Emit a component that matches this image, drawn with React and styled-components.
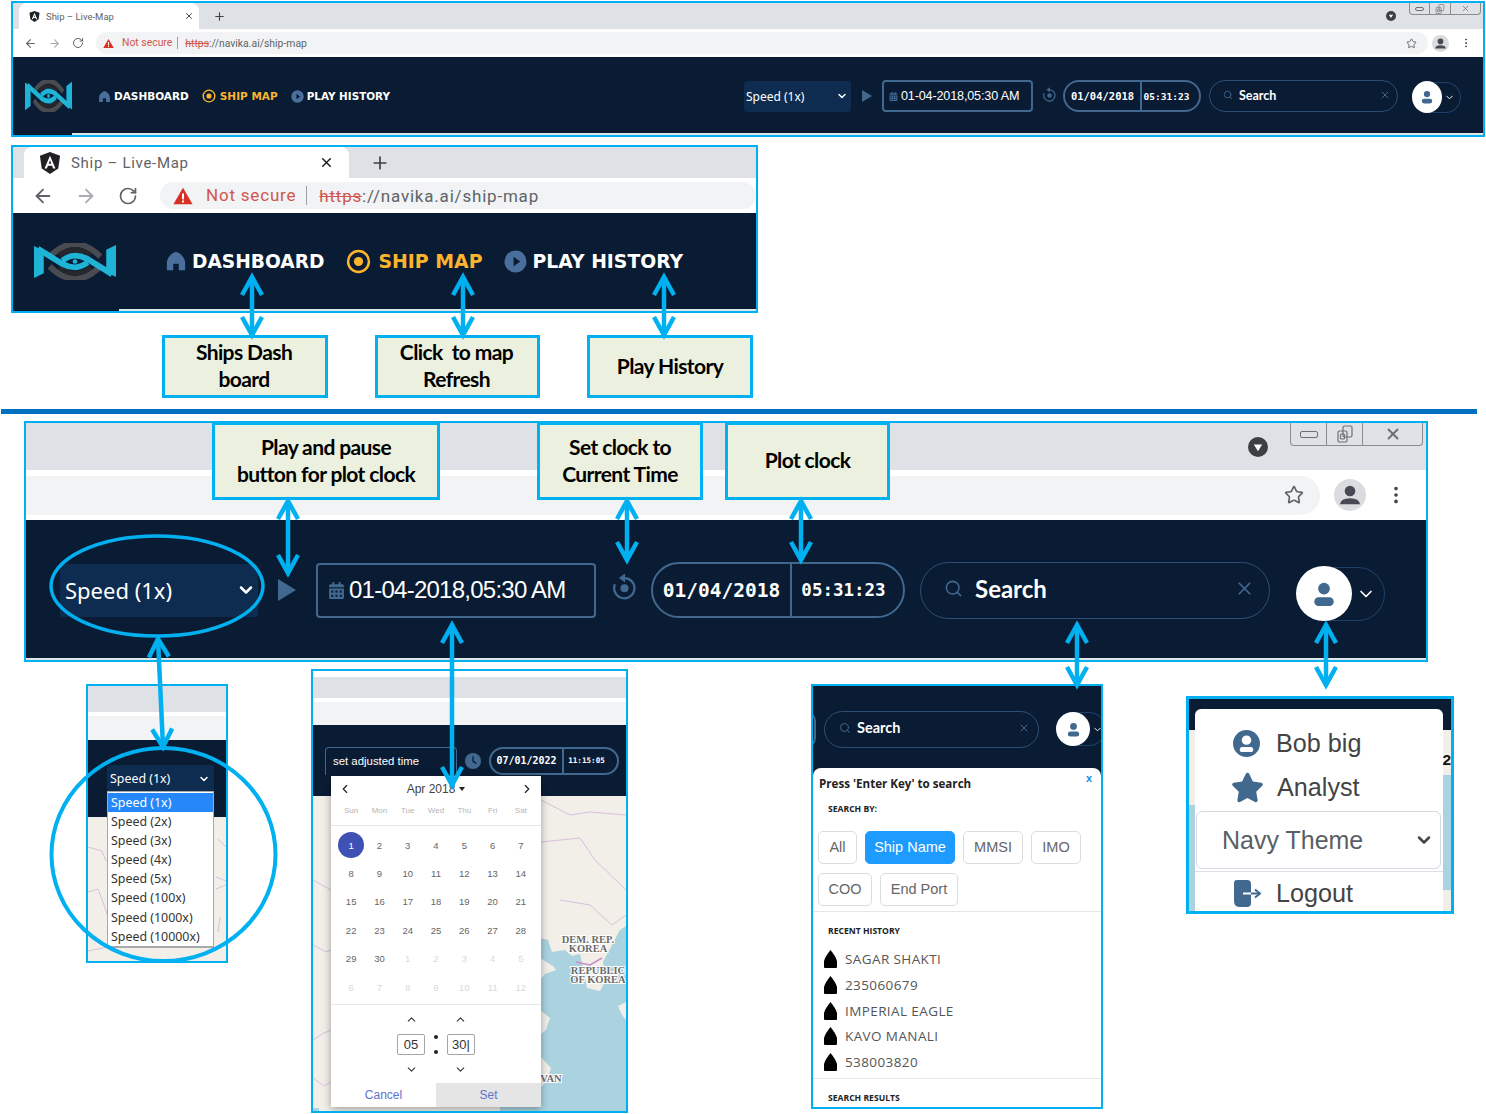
import React from "react";
import styled, { createGlobalStyle } from "styled-components";
import { ArrowLeft, ArrowRight, ChevronDown, ChevronLeft, ChevronRight, ChevronUp, EllipsisVertical, Plus, RotateCw, Search, Star, X } from "lucide-react";
import { FaCalendarAlt, FaStar } from "react-icons/fa";

const CYAN = "#00b0f0";
const NAVY = "#0a1c33";
const STEEL = "#41688f";
const LAND = "#f2efe9";
const SEA = "#aad3df";
const BORDERLINE = "#d9bfdc";

/* little drawings */
function AngularIcon({ size }) {
  return (
    <svg width={size} height={size} viewBox="0 0 24 24">
      <path d="M12 0 L23 4 L21 18 L12 24 L3 18 L1 4Z" fill="#202124" />
      <path d="M12 4 L18 18 H15.4 L14.3 15 H9.7 L8.6 18 H6Z M12 9 L10.6 12.8 H13.4Z" fill="#fff" fillRule="evenodd" />
    </svg>
  );
}

function WarnIcon({ size }) {
  return (
    <svg width={size} height={size} viewBox="0 0 24 24">
      <path d="M12 2 L23.5 22 H0.5Z" fill="#d93025" />
      <rect x="10.8" y="9" width="2.4" height="7" fill="#fff" />
      <rect x="10.8" y="17.4" width="2.4" height="2.4" fill="#fff" />
    </svg>
  );
}

function CaptionDot({ size }) {
  return (
    <svg width={size} height={size} viewBox="0 0 24 24">
      <circle cx="12" cy="12" r="12" fill="#3c4043" />
      <path d="M7 9 H17 L12 17Z" fill="#fff" />
    </svg>
  );
}

function Logo({ width, height }) {
  return (
    <svg width={width} height={height} viewBox="0 0 84 38" preserveAspectRatio="none" style={{ display: "block", flexShrink: 0 }}>
      <path d="M16 14 Q42 -12 68 14" fill="none" stroke="#4a4b50" strokeWidth="6" />
      <path d="M16 24 Q42 50 68 24" fill="none" stroke="#4a4b50" strokeWidth="6" />
      <path d="M26 13 Q42 1 58 13" fill="none" stroke="#26272c" strokeWidth="5" />
      <path d="M26 25 Q42 37 58 25" fill="none" stroke="#26272c" strokeWidth="5" />
      <path d="M0 3 L10 8 V31 L0 36Z" fill="#1fb4d6" />
      <path d="M84 35 L74 30 V7 L84 2Z" fill="#1fb4d6" />
      <path d="M4 6 L30 22 Q36 25 42 25 Q48 25 55 20" fill="none" stroke="#1fb4d6" strokeWidth="6" />
      <path d="M29 18 Q36 13 42 13 Q48 13 54 16 L80 32" fill="none" stroke="#1fb4d6" strokeWidth="6" />
      <circle cx="42" cy="19" r="2.4" fill="#1fb4d6" />
    </svg>
  );
}

function HomeIcon({ size }) {
  return (
    <svg width={size} height={size} viewBox="0 0 24 24">
      <path d="M12 2 C6 4 2 9 2 14 V22 H9 V15 H15 V22 H22 V14 C22 9 18 4 12 2Z" fill="#4a6f9c" />
    </svg>
  );
}

function TargetIcon({ size }) {
  return (
    <svg width={size} height={size} viewBox="0 0 24 24">
      <circle cx="12" cy="12" r="10" fill="none" stroke="#fcb42d" strokeWidth="2.4" />
      <circle cx="12" cy="12" r="4.4" fill="#fcb42d" />
    </svg>
  );
}

function PlayDisc({ size }) {
  return (
    <svg width={size} height={size} viewBox="0 0 24 24">
      <circle cx="12" cy="12" r="11.5" fill="#4a6f9c" />
      <path d="M10 7 L17 12 L10 17Z" fill="#0a1c33" />
    </svg>
  );
}

function ResetIcon({ size }) {
  return (
    <svg width={size} height={size} viewBox="0 0 24 24">
      <path d="M11 4.5 A9 9 0 1 1 3.5 10" fill="none" stroke={STEEL} strokeWidth="2" />
      <path d="M12.5 0.5 V8.5 L7 4.5Z" fill={STEEL} />
      <circle cx="12" cy="13.5" r="3.6" fill={STEEL} />
    </svg>
  );
}

function ClockDisc({ size }) {
  return (
    <svg width={size} height={size} viewBox="0 0 24 24">
      <circle cx="12" cy="12" r="12" fill={STEEL} />
      <path d="M12 5 V12.5 L17 15.5" fill="none" stroke={NAVY} strokeWidth="2" />
    </svg>
  );
}

function Person({ size, color = STEEL }) {
  return (
    <svg width={size} height={size} viewBox="0 0 24 24">
      <circle cx="12" cy="7" r="5.4" fill={color} />
      <rect x="3" y="15" width="18" height="8" rx="4" fill={color} />
    </svg>
  );
}

function ChromeAvatar({ size }) {
  return (
    <svg width={size} height={size} viewBox="0 0 24 24">
      <circle cx="12" cy="12" r="12" fill="#dadce0" />
      <circle cx="12" cy="9" r="4" fill="#474a54" />
      <path d="M4.5 19 Q5 14.5 12 14.5 Q19 14.5 19.5 19Z" fill="#474a54" />
    </svg>
  );
}

function UserDisc({ size }) {
  return (
    <svg width={size} height={size} viewBox="0 0 24 24">
      <circle cx="12" cy="12" r="12" fill={STEEL} />
      <circle cx="12" cy="9" r="4.2" fill="#fff" />
      <rect x="6" y="15" width="12" height="4.6" rx="2.3" fill="#fff" />
    </svg>
  );
}

function LogoutIcon({ width, height }) {
  return (
    <svg width={width} height={height} viewBox="0 0 27 27">
      <path d="M3 0 H13 Q17 0 17 4 V23 Q17 27 13 27 H6 Q0 27 0 21 V3 Q0 0 3 0Z" fill={STEEL} />
      <path d="M9 13.5 H17" stroke="#fff" strokeWidth="2" />
      <path d="M17 13.5 H25" stroke={STEEL} strokeWidth="2" />
      <path d="M21 9.5 L26 13.5 L21 17.5" fill="none" stroke={STEEL} strokeWidth="2" />
    </svg>
  );
}

function ShipIcon() {
  return (
    <svg width="13" height="18" viewBox="0 0 13 18" style={{ flexShrink: 0 }}>
      <path d="M6.5 0 C9 3 12 7 13 11 V17 Q13 18 12 18 H1 Q0 18 0 17 V11 C1 7 4 3 6.5 0Z" fill="#000" />
    </svg>
  );
}

function Restore({ size }) {
  return (
    <svg width={size} height={size} viewBox="0 0 18 18" fill="none" stroke="#6f6f6f" strokeWidth="1.2">
      <rect x="2" y="6" width="9" height="11" rx="1.5" />
      <rect x="7" y="1" width="9" height="11" rx="1.5" />
      <rect x="4.5" y="9" width="4" height="5" rx="1" />
    </svg>
  );
}

/* page + panels */
const GlobalStyle = createGlobalStyle`
  html, body { margin: 0; padding: 0; background: #fff; }
  body { font-family: "Liberation Sans", Arial, sans-serif; }
  * { box-sizing: border-box; }
`;

const Page = styled.div`
  position: relative;
  width: 1486px;
  height: 1114px;
  overflow: hidden;
  background: #fff;
  padding-top: 1px;
`;

const Panel = styled.div`
  position: relative;
  display: flex;
  flex-direction: column;
  flex-shrink: 0;
  width: ${(p) => p.$w}px;
  height: ${(p) => p.$h}px;
  margin-left: ${(p) => p.$ml || 0}px;
  margin-top: ${(p) => p.$mt || 0}px;
  border: ${(p) => p.$b || 2}px solid ${CYAN};
  background: #fff;
  overflow: hidden;
`;

const TabStrip = styled.div`
  display: flex;
  align-items: flex-end;
  flex-shrink: 0;
  height: ${(p) => p.$h}px;
  padding-left: ${(p) => p.$pl || 0}px;
  padding-right: ${(p) => p.$pr || 0}px;
  background: #dee1e6;
`;

const Tab = styled.div`
  display: flex;
  align-items: center;
  width: ${(p) => p.$w}px;
  height: ${(p) => p.$h}px;
  padding: 0 ${(p) => p.$pr}px 0 ${(p) => p.$pl}px;
  gap: ${(p) => p.$gap}px;
  background: #fff;
  border-radius: 8px 8px 0 0;
  font-family: "Roboto", sans-serif;
  font-size: ${(p) => p.$fs}px;
  letter-spacing: ${(p) => p.$ls || 0}px;
  color: #5f6368;
`;

const TabTitle = styled.span`
  flex: 1;
`;

const NewTab = styled.div`
  display: flex;
  align-items: center;
  height: ${(p) => p.$h}px;
  margin-left: ${(p) => p.$ml}px;
  color: #3c4043;
`;

const CaptionSlot = styled.div`
  display: flex;
  margin-left: auto;
  align-self: center;
`;

const WindowButtons = styled.div`
  display: flex;
  align-self: flex-start;
  width: ${(p) => p.$w}px;
  height: ${(p) => p.$h}px;
  margin-left: ${(p) => p.$ml}px;
  border: 1px solid #8c8c8c;
  border-top: none;
  border-radius: 0 0 4px 4px;
`;

const WindowCell = styled.div`
  display: flex;
  align-items: center;
  justify-content: center;
  flex: ${(p) => p.$grow};
  color: #6f6f6f;
  & + & {
    border-left: 1px solid #8c8c8c;
  }
`;

const MinBar = styled.span`
  display: block;
  width: ${(p) => p.$w}px;
  height: ${(p) => p.$h}px;
  border: 1px solid #6f6f6f;
  border-radius: 2px;
`;

const ToolBar = styled.div`
  display: flex;
  align-items: center;
  flex-shrink: 0;
  height: ${(p) => p.$h}px;
  padding: 0 ${(p) => p.$pr || 0}px 0 ${(p) => p.$pl || 0}px;
  gap: ${(p) => p.$gap || 0}px;
  background: #fff;
  color: #5f6368;
`;

const Omnibox = styled.div`
  display: flex;
  align-items: center;
  flex: 1;
  height: ${(p) => p.$h}px;
  margin-left: ${(p) => p.$ml || 0}px;
  padding: 0 ${(p) => p.$pr || 8}px 0 ${(p) => p.$pl || 8}px;
  background: #f1f3f4;
  border-radius: ${(p) => (p.$flat ? "0 20px 20px 0" : "20px")};
  font-family: "Roboto", sans-serif;
  font-size: ${(p) => p.$fs || 10}px;
  letter-spacing: ${(p) => p.$ls || 0}px;
  color: #5f6368;
`;

const NotSecure = styled.span`
  margin-left: ${(p) => p.$ml}px;
  padding-right: ${(p) => p.$pad}px;
  color: #d0574e;
  border-right: 1px solid #9aa0a6;
  line-height: 1.1;
`;

const Https = styled.span`
  margin-left: ${(p) => p.$ml}px;
  color: #d0574e;
  text-decoration: line-through;
`;

const ToolStar = styled.div`
  display: flex;
  margin-left: auto;
  color: #5f6368;
`;

const ToolSlot = styled.div`
  display: flex;
  margin-left: ${(p) => p.$ml || 0}px;
`;

const NavBar = styled.div`
  display: flex;
  align-items: center;
  flex: ${(p) => (p.$fixed ? `none` : 1)};
  height: ${(p) => (p.$fixed ? `${p.$fixed}px` : "auto")};
  min-height: 0;
  padding-top: ${(p) => p.$pt || 0}px;
  padding-left: ${(p) => p.$pl || 0}px;
  padding-right: ${(p) => p.$pr || 0}px;
  background: ${NAVY};
  overflow: hidden;
`;

const MapEdge = styled.div`
  flex: ${(p) => (p.$fill ? 1 : "none")};
  height: 2px;
  margin-left: ${(p) => p.$ml || 0}px;
  background: #dfe6e6;
`;

const NavEdge = styled.div`
  display: flex;
  flex-shrink: 0;
  height: 2px;
  background: ${NAVY};
`;

const NavLinks = styled.div`
  display: flex;
  align-items: center;
  margin-left: ${(p) => p.$ml}px;
`;

const NavLink = styled.div`
  display: flex;
  align-items: center;
  gap: ${(p) => p.$gap}px;
  margin-right: ${(p) => p.$mr}px;
  font-family: "DejaVu Sans", "Liberation Sans", sans-serif;
  font-weight: 700;
  font-size: ${(p) => p.$fs}px;
  white-space: nowrap;
  color: ${(p) => (p.$active ? "#fcb42d" : "#fff")};
`;

const Controls = styled.div`
  display: flex;
  align-items: center;
  margin-left: ${(p) => (p.$left ? 0 : "auto")};
`;

const SpeedSelect = styled.div`
  display: flex;
  align-items: center;
  justify-content: space-between;
  width: ${(p) => p.$w}px;
  height: ${(p) => p.$h}px;
  padding: 0 ${(p) => p.$pr}px 0 ${(p) => p.$pl}px;
  background: #0d2c4f;
  border-radius: 3px;
  font-family: "Noto Sans", sans-serif;
  font-size: ${(p) => p.$fs}px;
  color: #fff;
`;

const Slot = styled.div`
  display: flex;
  flex-shrink: 0;
  margin-left: ${(p) => p.$ml}px;
  margin-top: ${(p) => p.$mt || 0}px;
`;

const PlayMark = styled.span`
  display: block;
  flex-shrink: 0;
  margin-left: ${(p) => p.$ml}px;
  border-left: ${(p) => p.$w}px solid ${STEEL};
  border-top: ${(p) => p.$h / 2}px solid transparent;
  border-bottom: ${(p) => p.$h / 2}px solid transparent;
`;

const DateBox = styled.div`
  display: flex;
  align-items: center;
  gap: ${(p) => p.$gap}px;
  width: ${(p) => p.$w}px;
  height: ${(p) => p.$h}px;
  margin-left: ${(p) => p.$ml || 0}px;
  padding-left: ${(p) => p.$pl}px;
  border: 2px solid ${STEEL};
  border-radius: 4px;
  font-family: "Liberation Sans", sans-serif;
  font-size: ${(p) => p.$fs}px;
  letter-spacing: ${(p) => p.$ls || 0}px;
  white-space: nowrap;
  color: #fff;
  svg {
    color: ${STEEL};
    flex-shrink: 0;
  }
`;

const ClockPill = styled.div`
  display: flex;
  align-items: center;
  flex-shrink: 0;
  width: ${(p) => p.$w}px;
  height: ${(p) => p.$h}px;
  margin-left: ${(p) => p.$ml}px;
  border: 2px solid ${STEEL};
  border-radius: ${(p) => p.$h / 2}px;
  font-family: "DejaVu Sans Mono", monospace;
  font-weight: 700;
  color: #fff;
  white-space: nowrap;
`;

const ClockPart = styled.span`
  display: flex;
  align-items: center;
  justify-content: center;
  width: ${(p) => p.$w}px;
  height: 100%;
  font-size: ${(p) => p.$fs}px;
  & + & {
    flex: 1;
    padding-right: ${(p) => p.$pad || 0}px;
    border-left: ${(p) => p.$rule}px solid ${STEEL};
  }
`;

const SearchPill = styled.div`
  display: flex;
  align-items: center;
  flex-shrink: 0;
  width: ${(p) => p.$w}px;
  height: ${(p) => p.$h}px;
  margin-left: ${(p) => p.$ml}px;
  padding: 0 ${(p) => p.$pr}px ${(p) => p.$pb || 0}px ${(p) => p.$pl}px;
  gap: ${(p) => p.$gap}px;
  border: 1.5px solid #2e4f75;
  border-radius: ${(p) => p.$h / 2}px;
  font-family: "Lato", sans-serif;
  font-weight: 700;
  font-size: ${(p) => p.$fs}px;
  color: #fff;
  svg {
    color: ${STEEL};
    flex-shrink: 0;
  }
`;

const PillLabel = styled.span`
  flex: 1;
`;

const UserPill = styled.div`
  display: flex;
  align-items: center;
  flex-shrink: 0;
  width: ${(p) => p.$w}px;
  height: ${(p) => p.$h}px;
  margin-left: ${(p) => p.$ml}px;
  margin-top: ${(p) => p.$mt || 0}px;
  border: 1px solid #1d4169;
  border-left: none;
  border-radius: ${(p) => p.$h / 2}px;
  color: #fff;
`;

const UserFace = styled.div`
  display: flex;
  align-items: center;
  justify-content: center;
  flex-shrink: 0;
  width: ${(p) => p.$d}px;
  height: ${(p) => p.$dh || p.$d}px;
  margin-right: ${(p) => p.$mr}px;
  background: #fff;
  border-radius: 50%;
`;

/* callouts */
const CalloutRow = styled.div`
  display: flex;
  gap: 47px;
  margin: 22px 0 0 162px;
`;

const Callout = styled.div`
  display: flex;
  align-items: center;
  justify-content: center;
  flex-direction: column;
  width: ${(p) => p.$w}px;
  height: ${(p) => p.$h}px;
  padding-right: ${(p) => p.$pr || 0}px;
  padding-bottom: ${(p) => p.$pb || 3}px;
  background: #ebf0df;
  border: 3px solid ${CYAN};
  font-family: "Lato", sans-serif;
  font-weight: 700;
  font-size: 21px;
  line-height: 27px;
  letter-spacing: -0.6px;
  text-align: center;
  color: #000;
`;

const FloatingCallout = styled(Callout)`
  position: absolute;
  top: 1px;
  left: ${(p) => p.$left}px;
`;

const Rule = styled.div`
  width: 1476px;
  height: 5px;
  margin: 11px 0 0 1px;
  background: #0070c0;
`;

const PlotWrap = styled.div`
  position: relative;
  width: 1404px;
  margin: 7px 0 0 24px;
`;

/* bottom row */
const BottomRow = styled.div`
  display: flex;
  align-items: flex-start;
  margin-top: 7px;
`;

const GreyBand = styled.div`
  flex-shrink: 0;
  height: ${(p) => p.$h}px;
  margin-top: ${(p) => p.$mt || 0}px;
  background: ${(p) => p.$c};
`;

const MapFill = styled.div`
  position: relative;
  flex: 1;
  min-height: 0;
  background: ${LAND};
  overflow: hidden;
`;

const SpeedList = styled.div`
  position: absolute;
  left: 19px;
  top: 105px;
  width: 107px;
  padding-top: 1px;
  background: #fff;
  border: 1px solid #a9a9a9;
  border-bottom-width: 2px;
  font-family: "Noto Sans", sans-serif;
  font-size: 12.4px;
  color: #333;
`;

const SpeedOption = styled.div`
  height: 19.1px;
  line-height: 19px;
  padding-left: 3px;
  white-space: nowrap;
  background: ${(p) => (p.$on ? "#2688f8" : "transparent")};
  color: ${(p) => (p.$on ? "#fff" : "#333")};
`;

const AdjustInput = styled.div`
  display: flex;
  align-items: center;
  width: 132px;
  height: 28px;
  padding-left: 7px;
  border: 1.5px solid ${STEEL};
  border-bottom: none;
  border-radius: 4px 4px 0 0;
  font-family: "Liberation Sans", sans-serif;
  font-size: 11.4px;
  color: #fff;
`;

const CalendarCard = styled.div`
  position: absolute;
  left: 18px;
  top: 105px;
  display: flex;
  flex-direction: column;
  width: 210px;
  height: 331px;
  background: #fff;
  box-shadow: 0 2px 8px rgba(0, 0, 0, 0.35);
  font-family: "Liberation Sans", sans-serif;
`;

const CalHead = styled.div`
  display: flex;
  align-items: center;
  justify-content: space-between;
  height: 26px;
  padding: 0 7px;
  font-size: 12px;
  color: #444;
`;

const CalTitle = styled.span`
  display: flex;
  align-items: center;
  gap: 4px;
  &::after {
    content: "";
    border-top: 4px solid #222;
    border-left: 3px solid transparent;
    border-right: 3px solid transparent;
  }
`;

const WeekRow = styled.div`
  display: grid;
  grid-template-columns: repeat(7, 1fr);
  height: 24px;
  padding: 0 6px;
  border-bottom: 1px solid #e5e5e5;
`;

const WeekName = styled.span`
  text-align: center;
  font-size: 8px;
  line-height: 17px;
  color: #b5b5b5;
`;

const DayGrid = styled.div`
  display: grid;
  grid-template-columns: repeat(7, 1fr);
  grid-auto-rows: 28.4px;
  padding: 5px 6px 0;
  height: 178px;
  flex-shrink: 0;
`;

const Day = styled.span`
  display: flex;
  align-items: center;
  justify-content: center;
  justify-self: center;
  width: 26px;
  height: 26px;
  align-self: center;
  font-size: 9.5px;
  border-radius: 50%;
  background: ${(p) => (p.$on ? "#3f51b5" : "transparent")};
  color: ${(p) => (p.$on ? "#fff" : p.$off ? "#d9d9d9" : "#666")};
`;

const TimeArea = styled.div`
  display: flex;
  flex-direction: column;
  flex: 1;
  align-items: center;
  justify-content: center;
  border-top: 1px solid #e8e8e8;
  color: #333;
`;

const TimeRow = styled.div`
  display: flex;
  align-items: center;
  justify-content: center;
  gap: ${(p) => p.$gap}px;
`;

const TimeBox = styled.div`
  display: flex;
  align-items: center;
  justify-content: center;
  width: 28px;
  height: 21px;
  margin: ${(p) => p.$m || 0}px 0;
  border: 1px solid #a5a5a5;
  border-radius: 2px;
  font-size: 13px;
  color: #333;
`;

const Colon = styled.span`
  display: flex;
  flex-direction: column;
  justify-content: space-between;
  width: 4px;
  height: 19px;
  &::before,
  &::after {
    content: "";
    width: 4px;
    height: 4px;
    border-radius: 50%;
    background: #222;
  }
`;

const CalFoot = styled.div`
  display: flex;
  height: 24px;
  flex-shrink: 0;
`;

const CalAction = styled.div`
  display: flex;
  align-items: center;
  justify-content: center;
  flex: ${(p) => p.$grow};
  background: ${(p) => (p.$grey ? "#e5e5e5" : "#fff")};
  font-size: 12px;
  color: #6272c8;
`;

const SearchCard = styled.div`
  position: relative;
  display: flex;
  flex-direction: column;
  flex: 1;
  padding-top: 10px;
  background: #fff;
  border-radius: 8px 8px 0 0;
  font-family: "Open Sans", sans-serif;
`;

const CardShell = styled.div`
  display: flex;
  flex: 1;
  background: ${NAVY};
`;

const PressHint = styled.div`
  padding-left: 6px;
  font-size: 11.6px;
  font-weight: 700;
  line-height: 12px;
  color: #222;
`;

const CloseX = styled.span`
  position: absolute;
  top: 4px;
  right: 9px;
  font-family: "Liberation Sans", sans-serif;
  font-size: 11px;
  font-weight: 700;
  color: #1e88e5;
`;

const SmallHead = styled.div`
  padding-left: 15px;
  margin-top: ${(p) => p.$mt}px;
  font-size: 8.6px;
  font-weight: 700;
  line-height: 10px;
  color: #222;
`;

const ChipWrap = styled.div`
  display: flex;
  flex-wrap: wrap;
  gap: 9px 8px;
  padding: 0 5px 5px;
  margin-top: 17px;
  border-bottom: 1px solid #e6e6e6;
`;

const Chip = styled.span`
  display: flex;
  align-items: center;
  justify-content: center;
  width: ${(p) => p.$w}px;
  height: 33px;
  padding-bottom: 1px;
  border: 1px solid ${(p) => (p.$on ? "#1e9bff" : "#dcdcdc")};
  border-radius: 5px;
  background: ${(p) => (p.$on ? "#1e9bff" : "#fff")};
  font-family: "Liberation Sans", sans-serif;
  font-size: 14.5px;
  color: ${(p) => (p.$on ? "#fff" : "#666")};
`;

const HistoryList = styled.div`
  display: flex;
  flex-direction: column;
  gap: 7.8px;
  margin-top: 14px;
  padding: 0 0 7px 11px;
  border-bottom: 1px solid #e6e6e6;
`;

const HistoryItem = styled.div`
  display: flex;
  align-items: center;
  gap: 8px;
  height: 18px;
  font-size: 13.5px;
  letter-spacing: 0.4px;
  color: #555;
`;

const ProfileCard = styled.div`
  position: absolute;
  left: 6px;
  top: 10px;
  width: 248px;
  height: 210px;
  background: #fff;
  border-radius: 6px 6px 0 0;
  font-family: "Liberation Sans", sans-serif;
  color: #444;
`;

const ProfileRow = styled.div`
  display: flex;
  align-items: center;
  height: ${(p) => p.$h}px;
  gap: ${(p) => p.$gap}px;
  margin-top: ${(p) => p.$mt || 0}px;
  padding-left: ${(p) => p.$pl}px;
  font-size: 25.2px;
`;

const ThemeSelect = styled.div`
  display: flex;
  align-items: center;
  justify-content: space-between;
  width: 245px;
  height: 58px;
  margin: 2px 0 0 1px;
  padding: 0 6px 0 25px;
  border: 1.5px solid #d5d9e0;
  border-radius: 6px;
  font-size: 25px;
  color: #5a5f66;
`;

const CardRule = styled.div`
  height: 1px;
  margin-top: 2px;
  background: #dcdfe4;
`;

const SeaPatch = styled.div`
  position: absolute;
  left: ${(p) => p.$l}px;
  top: ${(p) => p.$t}px;
  width: ${(p) => p.$w}px;
  height: ${(p) => p.$h}px;
  background: ${SEA};
`;

const MapNumber = styled.span`
  position: absolute;
  left: 253.5px;
  top: 21px;
  font-family: "Liberation Sans", sans-serif;
  font-weight: 700;
  font-size: 15.5px;
  color: #111;
`;

const Overlay = styled.svg`
  position: absolute;
  left: 0;
  top: 0;
  width: 1486px;
  height: 1114px;
  pointer-events: none;
`;

const MapSvg = styled.svg`
  position: absolute;
  left: 0;
  top: 0;
  width: 100%;
  height: 100%;
`;

/* shared bits of markup */
function RightControls({ left, c }) {
  return (
    <Controls $left={left}>
      <SpeedSelect $w={c.sel[0]} $h={c.sel[1]} $pl={c.sel[2]} $pr={c.sel[3]} $fs={c.sel[4]}>
        Speed (1x)
        <ChevronDown size={c.sel[5]} strokeWidth={3} />
      </SpeedSelect>
      <PlayMark $ml={c.play[0]} $w={c.play[1]} $h={c.play[2]} />
      <DateBox $ml={c.date[0]} $w={c.date[1]} $h={c.date[2]} $pl={c.date[3]} $gap={c.date[4]} $fs={c.date[5]} $ls={c.date[6]}>
        <FaCalendarAlt size={c.date[7]} />
        01-04-2018,05:30 AM
      </DateBox>
      <Slot $ml={c.reset[0]} $mt={c.reset[2]}>
        <ResetIcon size={c.reset[1]} />
      </Slot>
      <ClockPill $ml={c.clock[0]} $w={c.clock[1]} $h={c.clock[2]}>
        <ClockPart $w={c.clock[3]} $fs={c.clock[4]}>01/04/2018</ClockPart>
        <ClockPart $fs={c.clock[5]} $rule={c.clock[6]} $pad={c.clock[7]}>05:31:23</ClockPart>
      </ClockPill>
      <SearchPill $ml={c.search[0]} $w={c.search[1]} $h={c.search[2]} $pl={c.search[3]} $pr={c.search[4]} $gap={c.search[5]} $fs={c.search[6]} $pb={c.search[9]}>
        <Search size={c.search[7]} />
        <PillLabel>Search</PillLabel>
        <X size={c.search[8]} />
      </SearchPill>
      <UserPill $ml={c.user[0]} $w={c.user[1]} $h={c.user[2]} $mt={c.user[7]}>
        <UserFace $d={c.user[3]} $dh={c.user[2] + 1} $mr={c.user[4]}>
          <Person size={c.user[5]} />
        </UserFace>
        <ChevronDown size={c.user[6]} strokeWidth={2} />
      </UserPill>
    </Controls>
  );
}

const TOP_CONTROLS = {
  sel: [107, 31, 2, 3, 12, 12],
  play: [11, 10, 13],
  date: [10, 151, 32, 5, 3, 12.6, -0.15, 9],
  reset: [9, 15, -4],
  clock: [6, 138, 32, 75, 10.5, 9.5, 2, 4],
  search: [8, 189, 32, 13, 6, 6, 12.5, 10, 12, 2],
  user: [14, 49, 31, 30, 2, 14, 11, 2],
};

const PLOT_CONTROLS = {
  sel: [198, 53, 5, 2, 22, 20],
  play: [20, 18, 22],
  date: [20, 280, 55, 10, 4, 24, -0.75, 17],
  reset: [15, 27, -7],
  clock: [13, 254, 56, 137, 19.5, 17.5, 4, 12],
  search: [15, 350, 57, 23, 14, 12, 24, 19, 21, 4],
  user: [26, 89, 54, 56, 4, 26, 20, 7],
};

const SPEEDS = ["1x", "2x", "3x", "4x", "5x", "100x", "1000x", "10000x"];
const WEEK = ["Sun", "Mon", "Tue", "Wed", "Thu", "Fri", "Sat"];
const DAYS = [];
for (let d = 1; d <= 30; d++) DAYS.push({ n: d, on: d === 1 });
[1, 2, 3, 4, 5, 6, 7, 8, 9, 10, 11, 12].forEach((n) => DAYS.push({ n, off: true }));
const HISTORY = ["SAGAR SHAKTI", "235060679", "IMPERIAL EAGLE", "KAVO MANALI", "538003820"];

const ARROWS = [
  [252, 277, 252, 335],
  [463, 277, 463, 335],
  [664, 277, 664, 335],
  [288, 501, 288, 573],
  [627, 501, 627, 560],
  [801, 501, 801, 560],
  [158, 639, 163, 747],
  [452, 625, 452, 785],
  [1077, 625, 1077, 685],
  [1326, 625, 1326, 685],
];

function Arrows() {
  return (
    <Overlay viewBox="0 0 1486 1114">
      <g fill="none" stroke={CYAN} strokeWidth="4.5">
        <ellipse cx="157" cy="586" rx="106" ry="50" strokeWidth="3.5" />
        <ellipse cx="163.5" cy="854.5" rx="112" ry="106.5" strokeWidth="4" />
        {ARROWS.map(([x1, y1, x2, y2]) => {
          const len = Math.hypot(x2 - x1, y2 - y1);
          const ux = (x2 - x1) / len;
          const uy = (y2 - y1) / len;
          const head = (x, y, dx, dy) =>
            `${x + dx * 18 - dy * 10},${y + dy * 18 + dx * 10} ${x},${y} ${x + dx * 18 + dy * 10},${y + dy * 18 - dx * 10}`;
          return (
            <g key={`${x1}-${y1}`}>
              <line x1={x1} y1={y1} x2={x2} y2={y2} />
              <polyline points={head(x1, y1, ux, uy)} />
              <polyline points={head(x2, y2, -ux, -uy)} />
            </g>
          );
        })}
      </g>
    </Overlay>
  );
}

function KoreaMap() {
  return (
    <MapSvg viewBox="0 0 313 315" preserveAspectRatio="none">
      <g transform="translate(-313,-796)">
        <path
          d="M540 938 L548 940 L552 952 L565 950 L572 956 L580 954 L583 967 L587 988 L600 991 L606 980 L603 962 L612 945 L620 930 L626 926 V1111 H500 V938Z"
          fill={SEA}
        />
        <path d="M540 958 L553 966 L556 970 L545 974 L540 980Z" fill={LAND} />
        <path d="M626 1002 L618 1006 L622 1015 L626 1020Z" fill={LAND} />
        <path d="M540 1010 L550 1018 L546 1030 L541 1034Z" fill={LAND} />
        <path d="M540 1056 L551 1068 L546 1082 L540 1088Z" fill={LAND} />
        <rect x="313" y="1108" width="6" height="3" fill={SEA} />
        <g fill="none" stroke={BORDERLINE} strokeWidth="1">
          <path d="M313 880 L322 885 L331 890" />
          <path d="M313 945 L326 952 L331 950" />
          <path d="M313 1040 L322 1034 L331 1030" />
          <path d="M313 1078 L324 1086 L331 1082" />
          <path d="M541 800 L570 815 L590 812 L626 815" />
          <path d="M541 842 L580 838 L595 860 L626 890" />
          <path d="M560 900 L590 905 L612 925 L626 915" />
          <path d="M576 962 L590 965 L602 958" stroke="#c98ec9" strokeWidth="1.5" />
        </g>
        <g
          fontFamily="'Liberation Serif', serif"
          fontWeight="700"
          fontSize="10.5"
          fill="#6b6b6b"
          stroke="#fff"
          strokeWidth="2"
          paintOrder="stroke"
          textAnchor="middle"
        >
          <text x="588" y="943">DEM. REP.</text>
          <text x="588" y="952">KOREA</text>
          <text x="598" y="974">REPUBLIC</text>
          <text x="598" y="983">OF KOREA</text>
          <text x="551" y="1082">VAN</text>
        </g>
      </g>
    </MapSvg>
  );
}

function BorderLines() {
  return (
    <MapSvg viewBox="0 0 138 144" preserveAspectRatio="none">
      <g fill="none" stroke={BORDERLINE} strokeWidth="1">
        <path d="M0 30 L14 34 L18 44 L32 36" />
        <path d="M0 75 L10 72 L16 88 L20 100" />
        <path d="M130 22 L138 30" />
        <path d="M128 60 L138 64" />
        <path d="M128 72 L138 68 M132 100 L130 115" />
        <path d="M0 134 L20 130 L40 138" />
      </g>
    </MapSvg>
  );
}

export default function App() {
  return (
    <>
      <GlobalStyle />
      <Page>
        {/* full header */}
        <Panel $ml={11} $w={1474} $h={136}>
          <TabStrip $h={26} $pl={6} $pr={2}>
            <Tab $w={180} $h={26} $pl={10} $pr={5} $gap={6} $fs={9.5}>
              <AngularIcon size={11} />
              <TabTitle>Ship – Live-Map</TabTitle>
              <X size={10} color="#202124" />
            </Tab>
            <NewTab $h={26} $ml={14}>
              <Plus size={13} />
            </NewTab>
            <CaptionSlot>
              <CaptionDot size={10} />
            </CaptionSlot>
            <WindowButtons $w={72} $h={12} $ml={13}>
              <WindowCell $grow={1}>
                <MinBar $w={9} $h={4} />
              </WindowCell>
              <WindowCell $grow={1}>
                <Restore size={10} />
              </WindowCell>
              <WindowCell $grow={1.5}>
                <X size={9} />
              </WindowCell>
            </WindowButtons>
          </TabStrip>
          <ToolBar $h={28} $pl={11} $pr={11} $gap={11}>
            <ArrowLeft size={13} />
            <ArrowRight size={13} color="#a9adb2" />
            <RotateCw size={12} />
            <Omnibox $h={22} $ml={1} $pl={7} $pr={11} $fs={10.4}>
              <WarnIcon size={11} />
              <NotSecure $ml={8} $pad={5}>Not secure</NotSecure>
              <Https $ml={7}>https</Https>://navika.ai/ship-map
              <ToolStar>
                <Star size={11} />
              </ToolStar>
            </Omnibox>
            <ToolSlot $ml={-6.5}>
              <ChromeAvatar size={17} />
            </ToolSlot>
            <ToolSlot>
              <EllipsisVertical size={12} color="#444" />
            </ToolSlot>
          </ToolBar>
          <NavBar $pl={12} $pr={22} $pt={2}>
            <Logo width={47} height={32} />
            <NavLinks $ml={26}>
              <NavLink $gap={3} $mr={13} $fs={10.5}>
                <HomeIcon size={13} />
                DASHBOARD
              </NavLink>
              <NavLink $gap={4} $mr={13} $fs={10.5} $active>
                <TargetIcon size={14} />
                SHIP MAP
              </NavLink>
              <NavLink $gap={3} $mr={0} $fs={10.4}>
                <PlayDisc size={13} />
                PLAY HISTORY
              </NavLink>
            </NavLinks>
            <RightControls c={TOP_CONTROLS} />
          </NavBar>
          <NavEdge>
            <MapEdge $ml={59} $fill />
          </NavEdge>
        </Panel>

        {/* left part, larger */}
        <Panel $ml={11} $mt={8} $w={747} $h={168}>
          <TabStrip $h={31} $pl={11}>
            <Tab $w={325} $h={31} $pl={15} $pr={15} $gap={10} $fs={15} $ls={0.7}>
              <AngularIcon size={22} />
              <TabTitle>Ship – Live-Map</TabTitle>
              <X size={15} color="#202124" strokeWidth={2.4} />
            </Tab>
            <NewTab $h={31} $ml={21}>
              <Plus size={20} />
            </NewTab>
          </TabStrip>
          <ToolBar $h={35} $pl={19} $gap={21}>
            <ArrowLeft size={22} />
            <ArrowRight size={22} color="#a9adb2" />
            <RotateCw size={20} />
            <Omnibox $h={27} $ml={1} $pl={13} $fs={17} $ls={0.8}>
              <WarnIcon size={20} />
              <NotSecure $ml={13} $pad={10}>Not secure</NotSecure>
              <Https $ml={12}>https</Https>://navika.ai/ship-map
            </Omnibox>
          </ToolBar>
          <NavBar $pl={21}>
            <Logo width={82} height={37} />
            <NavLinks $ml={49}>
              <NavLink $gap={5} $mr={22} $fs={18.6}>
                <HomeIcon size={22} />
                DASHBOARD
              </NavLink>
              <NavLink $gap={7} $mr={21} $fs={18.9} $active>
                <TargetIcon size={25} />
                SHIP MAP
              </NavLink>
              <NavLink $gap={6} $mr={0} $fs={18.8}>
                <PlayDisc size={23} />
                PLAY HISTORY
              </NavLink>
            </NavLinks>
          </NavBar>
          <NavEdge>
            <MapEdge $ml={106} $fill />
          </NavEdge>
        </Panel>

        <CalloutRow>
          <Callout $w={166} $h={63} $pr={2}>
            <span>Ships Dash</span>
            <span>board</span>
          </Callout>
          <Callout $w={165} $h={63} $pr={2}>
            <span>Click &nbsp;to map</span>
            <span>Refresh</span>
          </Callout>
          <Callout $w={166} $h={63}>
            Play History
          </Callout>
        </CalloutRow>

        <Rule />

        {/* plot controls, larger */}
        <PlotWrap>
          <Panel $w={1404} $h={241}>
            <TabStrip $h={47} $pr={3}>
              <CaptionSlot>
                <CaptionDot size={20} />
              </CaptionSlot>
              <WindowButtons $w={133} $h={23} $ml={22}>
                <WindowCell $grow={1}>
                  <MinBar $w={18} $h={7} />
                </WindowCell>
                <WindowCell $grow={1}>
                  <Restore size={18} />
                </WindowCell>
                <WindowCell $grow={1.67}>
                  <X size={18} strokeWidth={2.5} />
                </WindowCell>
              </WindowButtons>
            </TabStrip>
            <ToolBar $h={50}>
              <Omnibox $h={39} $flat $pr={16}>
                <ToolStar>
                  <Star size={20} />
                </ToolStar>
              </Omnibox>
              <ToolSlot $ml={14}>
                <ChromeAvatar size={32} />
              </ToolSlot>
              <ToolSlot $ml={19}>
                <EllipsisVertical size={22} color="#444" />
              </ToolSlot>
              <ToolSlot $ml={19} />
            </ToolBar>
            <NavBar $pl={34} $pt={2}>
              <RightControls left c={PLOT_CONTROLS} />
            </NavBar>
            <MapEdge />
          </Panel>
          <FloatingCallout $left={188} $w={228} $h={78}>
            <span>Play and pause</span>
            <span>button for plot clock</span>
          </FloatingCallout>
          <FloatingCallout $left={513} $w={166} $h={78}>
            <span>Set clock to</span>
            <span>Current Time</span>
          </FloatingCallout>
          <FloatingCallout $left={701} $w={165} $h={78}>
            Plot clock
          </FloatingCallout>
        </PlotWrap>

        <BottomRow>
          {/* speed menu */}
          <Panel $ml={86} $mt={15} $w={142} $h={279}>
            <GreyBand $h={26} $c="#dee1e6" />
            <GreyBand $h={24} $mt={4} $c="#f1f3f4" />
            <NavBar $fixed={77} $pl={19}>
              <SpeedSelect $w={107} $h={28} $pl={3} $pr={4} $fs={12.4}>
                Speed (1x)
                <ChevronDown size={12} strokeWidth={3} />
              </SpeedSelect>
            </NavBar>
            <MapFill>
              <BorderLines />
            </MapFill>
            <SpeedList>
              {SPEEDS.map((s, i) => (
                <SpeedOption key={s} $on={i === 0}>
                  Speed ({s})
                </SpeedOption>
              ))}
            </SpeedList>
          </Panel>

          {/* calendar */}
          <Panel $ml={83} $w={317} $h={444}>
            <GreyBand $h={6} $c="#fff" />
            <GreyBand $h={21} $c="#dee1e6" />
            <GreyBand $h={23} $mt={4} $c="#f1f3f4" />
            <NavBar $fixed={71} $pl={12}>
              <AdjustInput>set adjusted time</AdjustInput>
              <Slot $ml={8}>
                <ClockDisc size={16} />
              </Slot>
              <ClockPill $ml={8} $w={130} $h={28}>
                <ClockPart $w={71} $fs={10}>07/01/2022</ClockPart>
                <ClockPart $fs={7.6} $rule={2} $pad={8}>11:15:05</ClockPart>
              </ClockPill>
            </NavBar>
            <MapFill>
              <KoreaMap />
            </MapFill>
            <CalendarCard>
              <CalHead>
                <ChevronLeft size={14} color="#222" strokeWidth={2} />
                <CalTitle>Apr 2018</CalTitle>
                <ChevronRight size={14} color="#222" strokeWidth={2} />
              </CalHead>
              <WeekRow>
                {WEEK.map((w) => (
                  <WeekName key={w}>{w}</WeekName>
                ))}
              </WeekRow>
              <DayGrid>
                {DAYS.map((d, i) => (
                  <Day key={i} $on={d.on} $off={d.off}>
                    {d.n}
                  </Day>
                ))}
              </DayGrid>
              <TimeArea>
                <TimeRow $gap={36}>
                  <ChevronUp size={13} />
                  <ChevronUp size={13} />
                </TimeRow>
                <TimeRow $gap={9}>
                  <TimeBox $m={8}>05</TimeBox>
                  <Colon />
                  <TimeBox $m={8}>30|</TimeBox>
                </TimeRow>
                <TimeRow $gap={36}>
                  <ChevronDown size={13} />
                  <ChevronDown size={13} />
                </TimeRow>
              </TimeArea>
              <CalFoot>
                <CalAction $grow={105}>Cancel</CalAction>
                <CalAction $grow={105} $grey>Set</CalAction>
              </CalFoot>
            </CalendarCard>
          </Panel>

          {/* search panel */}
          <Panel $ml={183} $mt={15} $w={292} $h={425}>
            <NavBar $fixed={82} $pt={4}>
              <Slot $ml={-17}>
                <ClockPill $ml={0} $w={20} $h={37} />
              </Slot>
              <SearchPill $ml={8} $w={215} $h={37} $pl={14} $pr={8} $gap={6} $fs={14.5} $pb={3}>
                <Search size={12} />
                <PillLabel>Search</PillLabel>
                <X size={12} />
              </SearchPill>
              <UserPill $ml={17} $w={50} $h={34}>
                <UserFace $d={34} $mr={2}>
                  <Person size={15} />
                </UserFace>
                <ChevronDown size={11} />
              </UserPill>
            </NavBar>
            <CardShell>
              <SearchCard>
                <PressHint>Press 'Enter Key' to search</PressHint>
                <CloseX>x</CloseX>
                <SmallHead $mt={14}>SEARCH BY:</SmallHead>
                <ChipWrap>
                  <Chip $w={39}>All</Chip>
                  <Chip $w={90} $on>Ship Name</Chip>
                  <Chip $w={60}>MMSI</Chip>
                  <Chip $w={50}>IMO</Chip>
                  <Chip $w={54}>COO</Chip>
                  <Chip $w={78}>End Port</Chip>
                </ChipWrap>
                <SmallHead $mt={14}>RECENT HISTORY</SmallHead>
                <HistoryList>
                  {HISTORY.map((h) => (
                    <HistoryItem key={h}>
                      <ShipIcon />
                      {h}
                    </HistoryItem>
                  ))}
                </HistoryList>
                <SmallHead $mt={14}>SEARCH RESULTS</SmallHead>
              </SearchCard>
            </CardShell>
          </Panel>

          {/* profile menu */}
          <Panel $ml={83} $mt={27} $w={268} $h={218} $b={3}>
            <GreyBand $h={31} $c={NAVY} />
            <MapFill>
              <SeaPatch $l={0} $t={75} $w={8} $h={106} />
              <SeaPatch $l={254} $t={45} $w={8} $h={115} />
              <MapNumber>2</MapNumber>
            </MapFill>
            <ProfileCard>
              <ProfileRow $h={44} $mt={12} $pl={38} $gap={16}>
                <UserDisc size={27} />
                Bob big
              </ProfileRow>
              <ProfileRow $h={44} $pl={36} $gap={13}>
                <FaStar size={33} color={STEEL} />
                Analyst
              </ProfileRow>
              <ThemeSelect>
                Navy Theme
                <ChevronDown size={20} strokeWidth={3} color="#444" />
              </ThemeSelect>
              <CardRule />
              <ProfileRow $h={42} $pl={39} $gap={15}>
                <LogoutIcon width={27} height={27} />
                Logout
              </ProfileRow>
            </ProfileCard>
          </Panel>
        </BottomRow>

        <Arrows />
      </Page>
    </>
  );
}
